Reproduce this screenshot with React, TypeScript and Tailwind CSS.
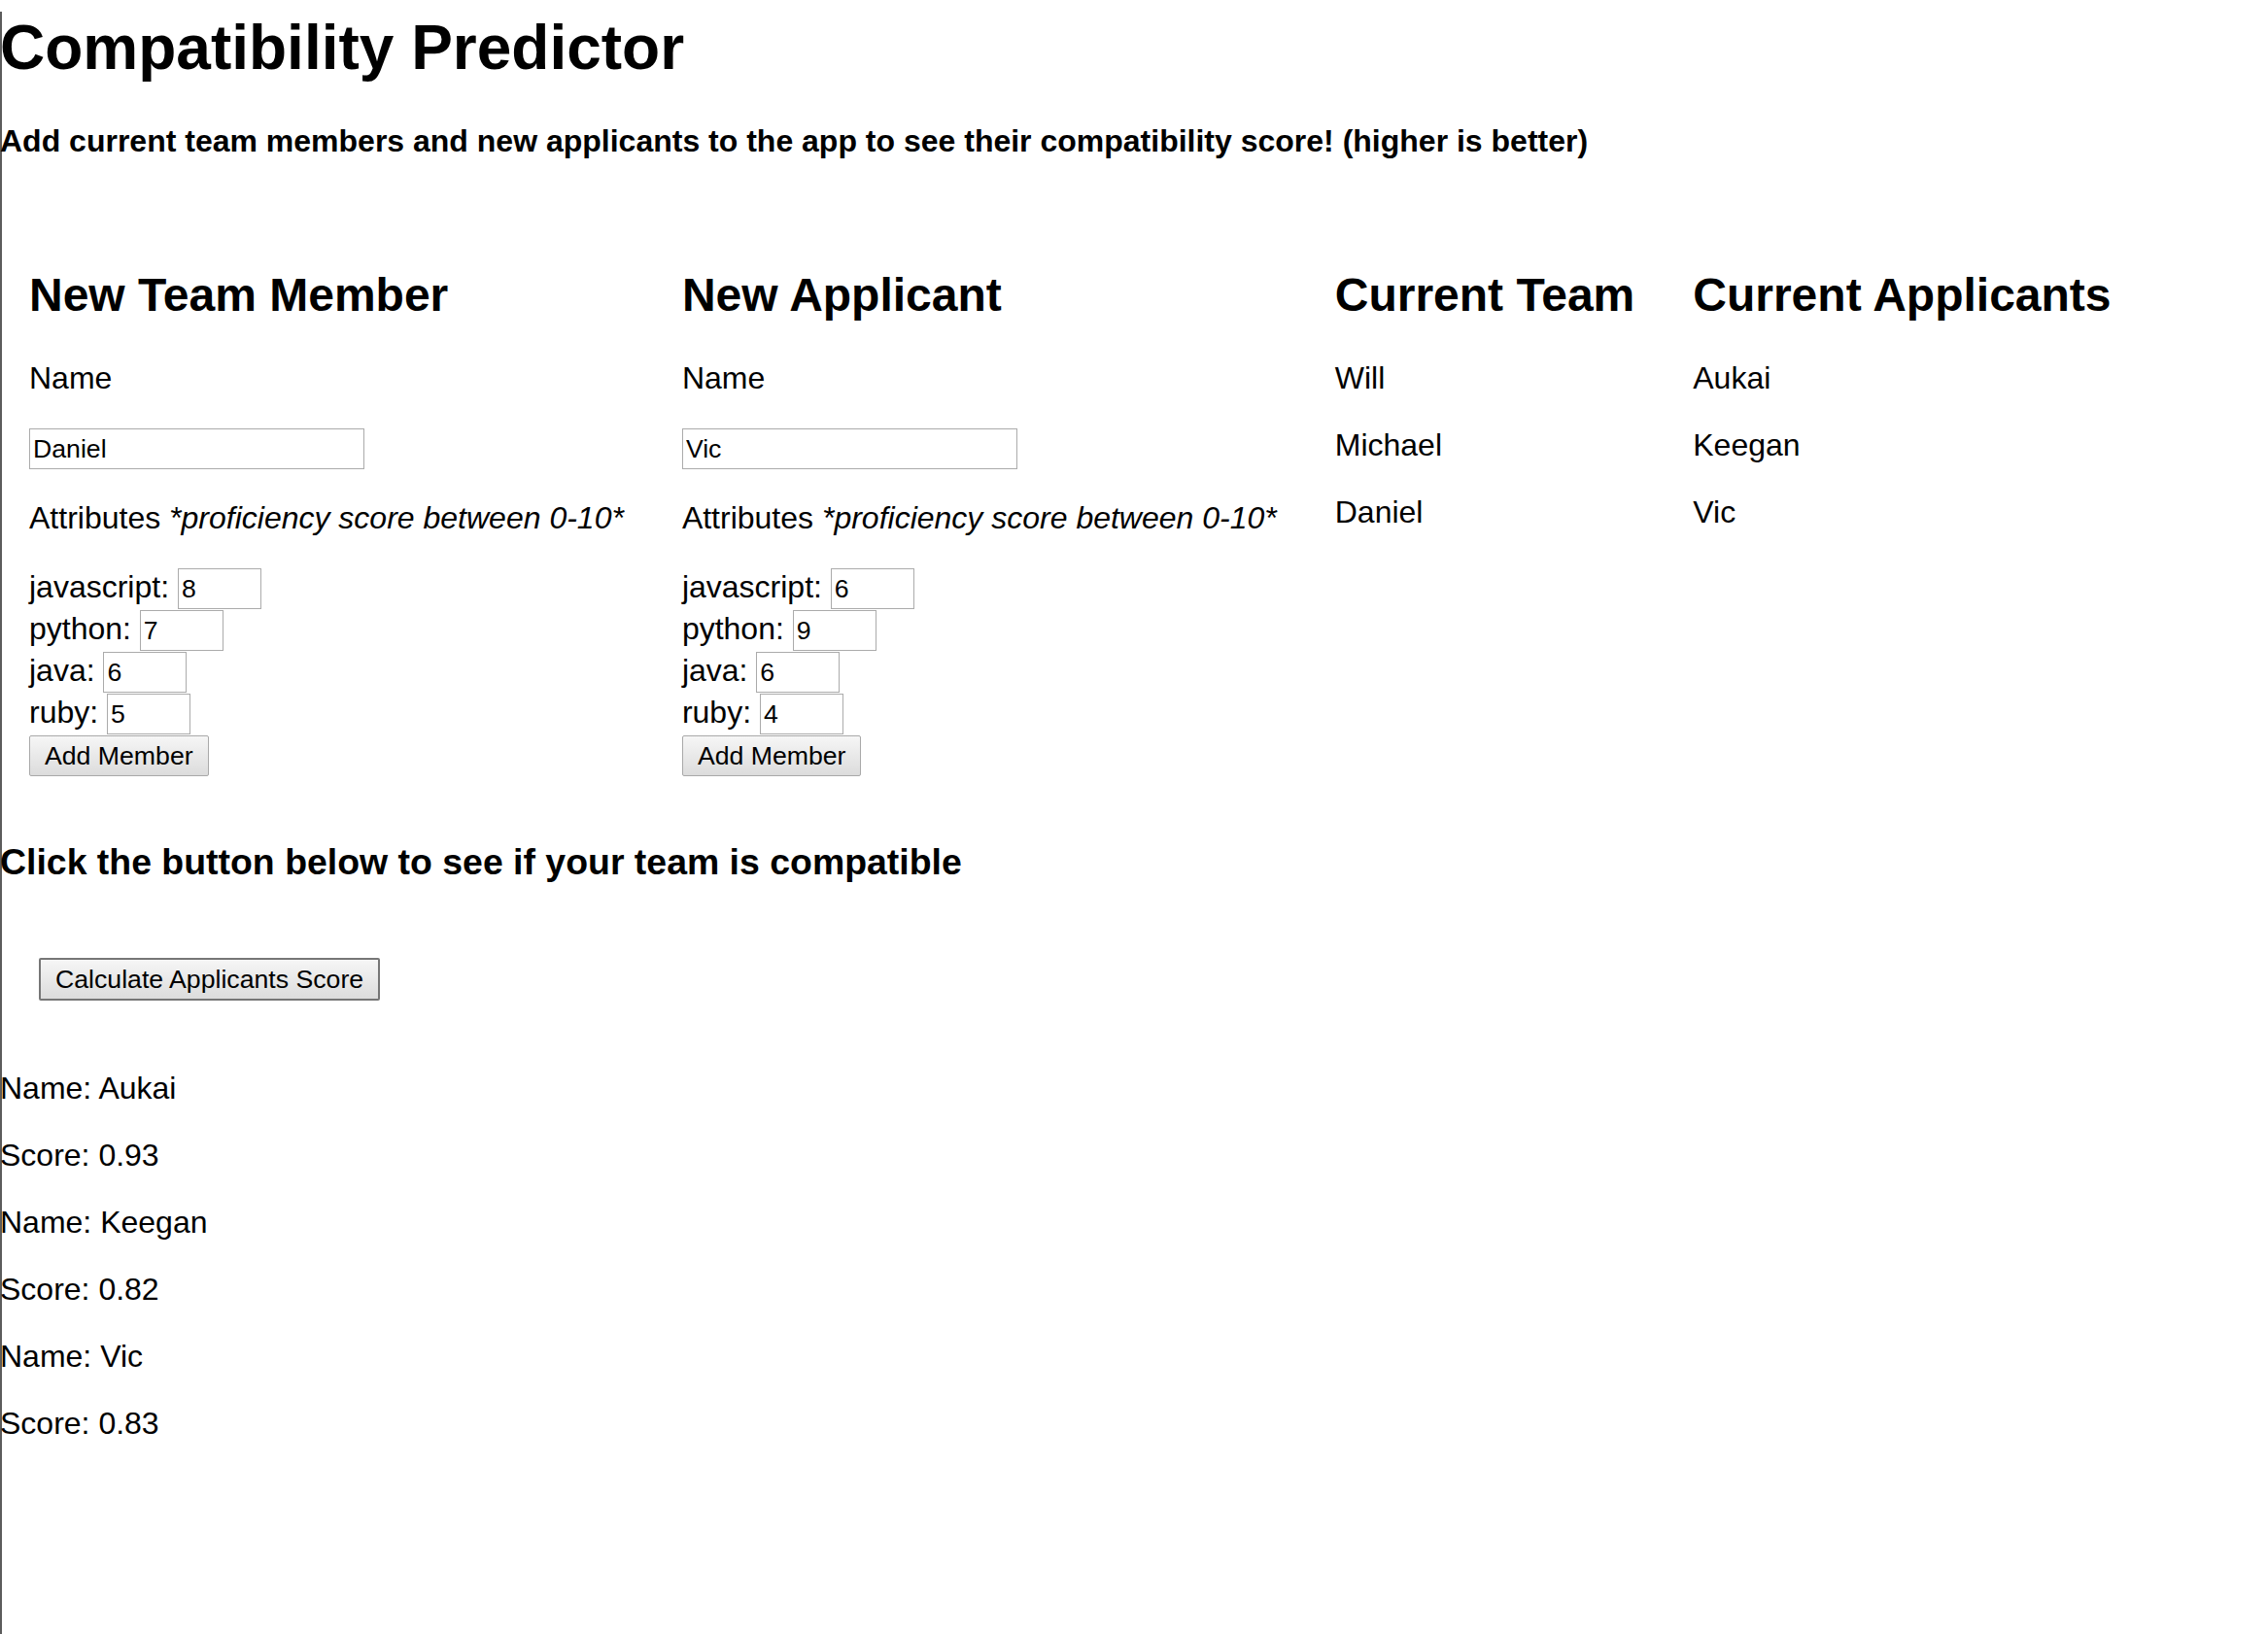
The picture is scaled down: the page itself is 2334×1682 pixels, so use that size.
import { useState } from "react";

type Person = {
  name: string;
};

type ScoreResult = {
  name: string;
  score: string;
};

const skills = ["javascript", "python", "java", "ruby"];

const team: Person[] = [{ name: "Will" }, { name: "Michael" }, { name: "Daniel" }];
const applicants: Person[] = [{ name: "Aukai" }, { name: "Keegan" }, { name: "Vic" }];

const results: ScoreResult[] = [
  { name: "Aukai", score: "0.93" },
  { name: "Keegan", score: "0.82" },
  { name: "Vic", score: "0.83" },
];

function NewPersonForm({
  title,
  name,
  scores,
}: {
  title: string;
  name: string;
  scores: Record<string, string>;
}) {
  const [value, setValue] = useState(name);

  return (
    <div className="shrink-0 p-[30px]">
      <h2 className="my-[40px] text-[48px] font-bold leading-[55px]">{title}</h2>
      <p className="my-[32px]">Name</p>
      <div className="my-[32px] pt-px">
        <input
          className="h-[42px] w-[345px] border border-[#ababab] bg-white px-[3px] align-baseline text-[26.67px] outline-none"
          type="text"
          value={value}
          onChange={(event) => setValue(event.target.value)}
        />
      </div>
      <p className="my-[32px]">
        Attributes <em>*proficiency score between 0-10*</em>
      </p>
      {skills.map((skill) => (
        <div key={skill} className="h-[43px] pt-px">
          {skill}:{" "}
          <input
            className="h-[42px] w-[86px] border border-[#ababab] bg-white px-[3px] align-baseline text-[26.67px] outline-none"
            type="text"
            defaultValue={scores[skill]}
          />
        </div>
      ))}
      <div className="h-[43px] pt-px">
        <button className="h-[42px] rounded-[2px] border border-[#a9a9a9] bg-linear-to-b from-[#f6f6f6] to-[#dcdcdc] px-[15px] py-0 align-baseline text-[26.67px]">
          Add Member
        </button>
      </div>
    </div>
  );
}

function NameList({ title, people }: { title: string; people: Person[] }) {
  return (
    <div className="shrink-0 p-[30px]">
      <h2 className="my-[40px] text-[48px] font-bold leading-[55px]">{title}</h2>
      {people.map((person) => (
        <p key={person.name} className="my-[32px]">
          {person.name}
        </p>
      ))}
    </div>
  );
}

export default function App() {
  return (
    <div className="min-h-screen bg-white font-['Liberation_Sans',Arial,sans-serif] text-[32px] leading-[37px] text-black shadow-[inset_2px_0_0_#5c5c5c]">
      <div className="pb-[80px]">
        <h1 className="mt-[12px] text-[64px] font-bold leading-[74px]">Compatibility Predictor</h1>
        <h4 className="mt-[41px] mb-[42px] font-bold">
          Add current team members and new applicants to the app to see their compatibility score! (higher is better)
        </h4>

        <div className="flex">
          <NewPersonForm
            title="New Team Member"
            name="Daniel"
            scores={{ javascript: "8", python: "7", java: "6", ruby: "5" }}
          />
          <NewPersonForm
            title="New Applicant"
            name="Vic"
            scores={{ javascript: "6", python: "9", java: "6", ruby: "4" }}
          />
          <NameList title="Current Team" people={team} />
          <NameList title="Current Applicants" people={applicants} />
        </div>

        <h3 className="my-[37px] text-[37.44px] font-bold leading-[43px]">
          Click the button below to see if your team is compatible
        </h3>
        <div className="p-[40px]">
          <button className="h-[44px] rounded-[2px] border-2 border-[#767676] bg-linear-to-b from-[#f6f6f6] to-[#dcdcdc] px-[15px] py-0 align-baseline text-[26.67px]">
            Calculate Applicants Score
          </button>
        </div>

        {results.map((result) => (
          <div key={result.name}>
            <p className="my-[32px]">Name: {result.name}</p>
            <p className="my-[32px]">Score: {result.score}</p>
          </div>
        ))}
      </div>
    </div>
  );
}
